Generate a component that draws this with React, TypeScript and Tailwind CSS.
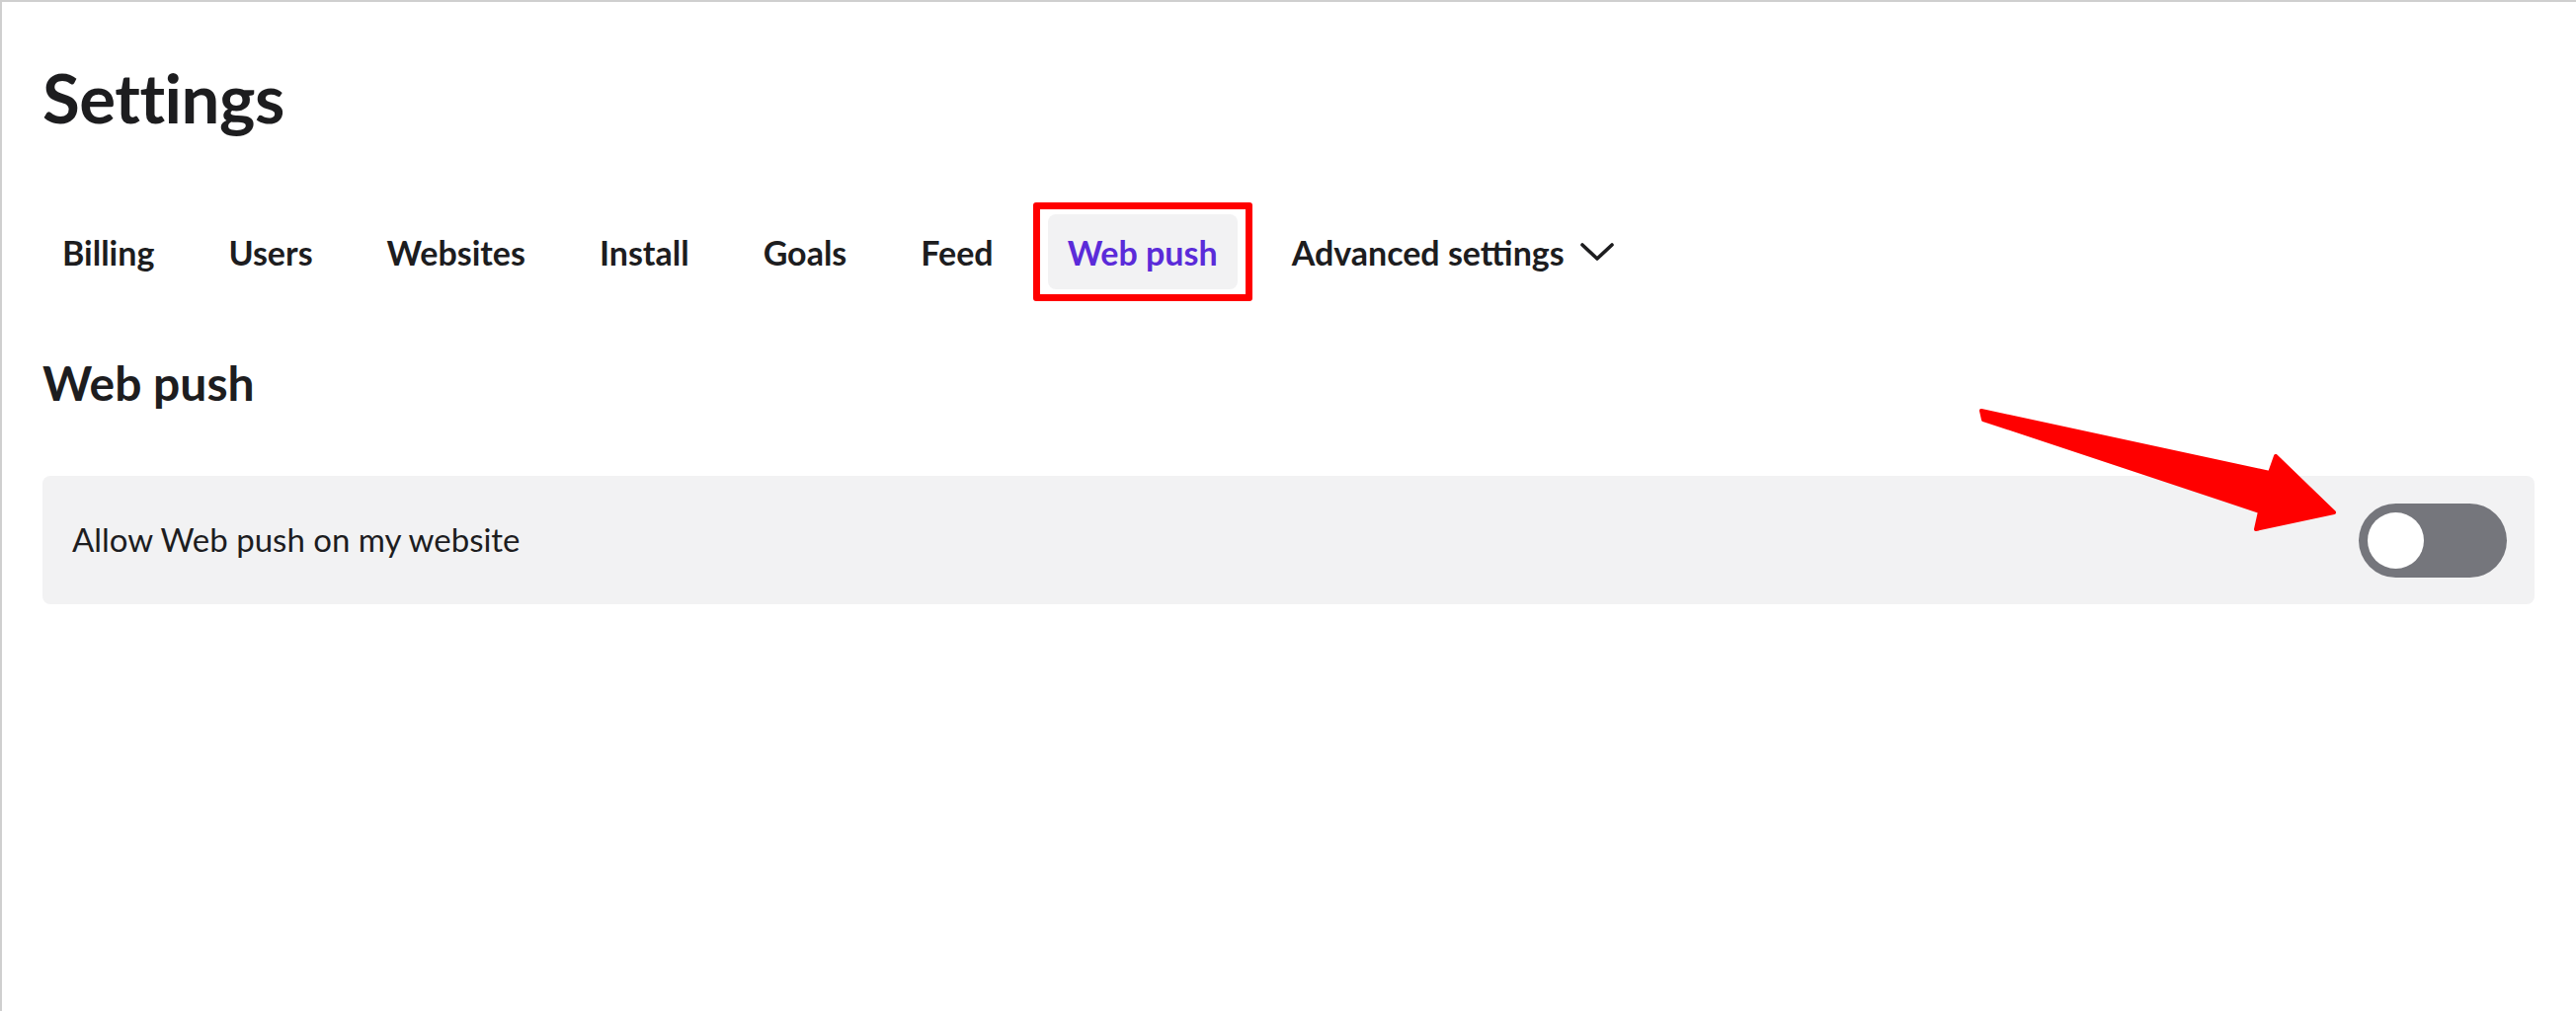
const tabs = ["Billing", "Users", "Websites", "Install", "Goals", "Feed"];

export default function App() {
  return (
    <div
      className="relative h-[1024px] w-[2608px] overflow-hidden border-t-2 border-l-2 border-[#cfcfcf] bg-white pl-[41px] pr-[42px] text-[#1d1d1f]"
      style={{ fontFamily: "Lato, 'Noto Sans', sans-serif" }}
    >
      {/* TITLE */}
      <h1 className="pt-[60px] text-[69px] font-bold leading-[74px] tracking-[-0.5px]">Settings</h1>

      {/* TABS */}
      <div className="mt-[81px] flex items-center gap-[35px]">
        {tabs.map((t) => (
          <div key={t} className="flex h-[76px] items-center px-[20px] text-[34px] font-bold">
            {t}
          </div>
        ))}
        <div className="relative">
          <div className="flex h-[76px] items-center rounded-[8px] bg-[#f2f2f3] px-[20px] text-[34px] font-bold text-[#5b2bd9]">
            Web push
          </div>
          {/* highlight box */}
          <div className="pointer-events-none absolute -inset-x-[15px] -inset-y-[12px] rounded-[3px] border-[7px] border-[#ff0000]" />
        </div>
        <div className="flex h-[76px] items-center gap-[15px] px-[20px] text-[34px] font-bold">
          Advanced settings
          <svg width="36" height="24" viewBox="0 0 36 24" fill="none" stroke="currentColor" strokeWidth="3.6" strokeLinecap="round" strokeLinejoin="round">
            <path d="M3 5 L18 19 L33 5" />
          </svg>
        </div>
      </div>

      {/* SECTION */}
      <h2 className="mt-[65px] text-[48px] font-bold leading-[60px]">Web push</h2>

      <div className="mt-[64px] flex h-[130px] items-center justify-between rounded-[8px] bg-[#f2f2f3] pl-[30px] pr-[28px]">
        <span className="text-[33px]">Allow Web push on my website</span>
        <div className="flex h-[75px] w-[150px] items-center rounded-full bg-[#75767c] px-[9px]">
          <div className="h-[57px] w-[57px] rounded-full bg-white" />
        </div>
      </div>

      {/* ANNOTATION ARROW */}
      <svg className="pointer-events-none absolute left-0 top-0" width="2608" height="1024">
        <polygon
          points="2004,414 2296,477 2302,460 2361,517 2282,534 2286,516 2006,423"
          fill="#ff0000"
          stroke="#ff0000"
          strokeWidth="4"
          strokeLinejoin="round"
        />
      </svg>
    </div>
  );
}
